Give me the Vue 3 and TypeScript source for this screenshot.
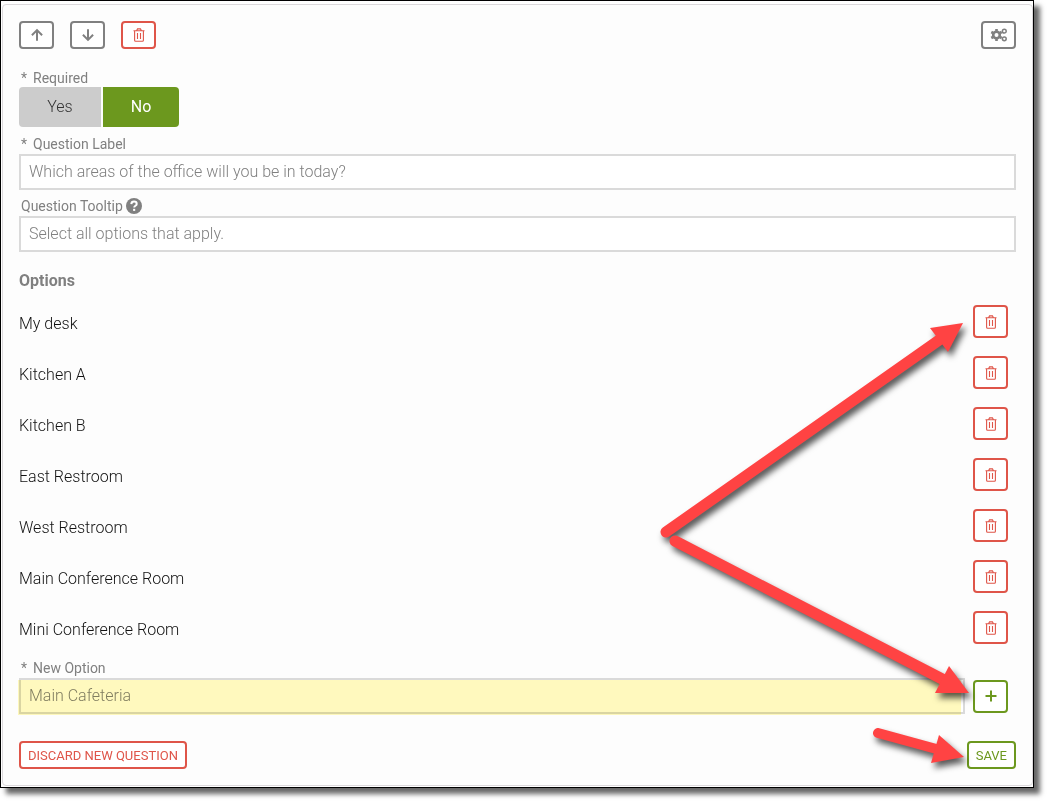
<script setup lang="ts">
import { ref } from 'vue'

const required = ref<boolean>(false)
const questionLabel = ref('Which areas of the office will you be in today?')
const questionTooltip = ref('Select all options that apply.')
const newOption = ref('Main Cafeteria')
const options = ref<string[]>([
  'My desk',
  'Kitchen A',
  'Kitchen B',
  'East Restroom',
  'West Restroom',
  'Main Conference Room',
  'Mini Conference Room',
])

function removeOption(index: number): void {
  options.value.splice(index, 1)
}

function addOption(): void {
  const value = newOption.value.trim()
  if (value) {
    options.value.push(value)
    newOption.value = ''
  }
}
</script>

<template>
  <main class="frame">
    <form class="card" @submit.prevent>
      <div class="toolbar">
        <button type="button" class="btn grey" aria-label="Move up">
          <svg class="icon" viewBox="0 0 14 14"><path d="M7 12.7V2.5M1.9 7.2L7 2.1l5.1 5.1" fill="none" stroke="currentColor" stroke-width="2" /></svg>
        </button>
        <button type="button" class="btn grey" aria-label="Move down">
          <svg class="icon" viewBox="0 0 14 14"><path d="M7 1.3v10.2M1.9 6.8L7 11.9l5.1-5.1" fill="none" stroke="currentColor" stroke-width="2" /></svg>
        </button>
        <button type="button" class="btn red" aria-label="Delete question">
          <svg class="icon" viewBox="0 0 14 14"><path d="M1.5 2.8h11M4.7 2.5l.8-1.6h3l.8 1.6M2.6 3v9.2q0 1 1 1h6.8q1 0 1-1V3M5.5 5v6M8.5 5v6" fill="none" stroke="currentColor" stroke-width="1.1" /></svg>
        </button>
        <button type="button" class="btn grey settings" aria-label="Settings">
          <svg class="gears" viewBox="0 0 18 14">
            <g fill="none" stroke="currentColor">
              <circle cx="6.5" cy="7" r="3.3" stroke-width="2.6" />
              <path d="M6.5 1v2M6.5 11v2M1.3 4l1.8 1M9.9 9l1.8 1M1.3 10l1.8-1M9.9 5l1.8-1" stroke-width="2.6" />
              <circle cx="14.3" cy="3.2" r="1.9" stroke-width="1.5" />
              <circle cx="14.3" cy="10.8" r="1.9" stroke-width="1.5" />
            </g>
          </svg>
        </button>
      </div>

      <div id="required-label" class="label required-label"><span class="star">*</span>Required</div>
      <div class="toggle" role="group" aria-labelledby="required-label">
        <button type="button" class="yes" :class="{ on: required }" :aria-pressed="required" @click="required = true">Yes</button>
        <button type="button" class="no" :class="{ on: !required }" :aria-pressed="!required" @click="required = false">No</button>
      </div>

      <label class="label" for="question-label"><span class="star">*</span>Question Label</label>
      <input id="question-label" v-model="questionLabel" class="field" type="text" />

      <label class="label" for="question-tooltip">Question Tooltip
        <svg class="help" viewBox="0 0 16 16">
          <circle cx="8" cy="8" r="8" fill="currentColor" />
          <path d="M5.3 6.1C5.4 4.4 6.5 3.6 8 3.6s2.7.9 2.7 2.3c0 1.9-2.5 1.9-2.5 3.7" fill="none" stroke="#fff" stroke-width="2" />
          <rect x="7.1" y="10.8" width="2.1" height="2.1" fill="#fff" />
        </svg>
      </label>
      <input id="question-tooltip" v-model="questionTooltip" class="field" type="text" />

      <h2 class="heading">Options</h2>
      <ul class="options">
        <li v-for="(option, index) in options" :key="option" class="option">
          <span class="option-name">{{ option }}</span>
          <button type="button" class="btn red tall" :aria-label="'Delete ' + option" @click="removeOption(index)">
            <svg class="icon" viewBox="0 0 14 14"><path d="M1.5 2.8h11M4.7 2.5l.8-1.6h3l.8 1.6M2.6 3v9.2q0 1 1 1h6.8q1 0 1-1V3M5.5 5v6M8.5 5v6" fill="none" stroke="currentColor" stroke-width="1.1" /></svg>
          </button>
        </li>
      </ul>

      <label class="label" for="new-option"><span class="star">*</span>New Option</label>
      <div class="add-row">
        <div class="marked">
          <input id="new-option" v-model="newOption" class="field" type="text" />
          <span class="highlight"></span>
        </div>
        <button type="button" class="btn green tall" aria-label="Add option" @click="addOption">
          <svg class="icon" viewBox="0 0 14 14"><path d="M7 1.5v11M1.5 7h11" fill="none" stroke="currentColor" stroke-width="2" /></svg>
        </button>
      </div>

      <div class="footer">
        <button type="button" class="btn red text">DISCARD NEW QUESTION</button>
        <button type="submit" class="btn green text">SAVE</button>
      </div>
    </form>

    <svg class="arrows" width="400" height="500" viewBox="633 300 400 500" aria-hidden="true">
      <g stroke="#ff4343" fill="#ff4343">
        <g class="arrow"><path d="M666 532L942 338" stroke-width="11" stroke-linecap="round" /><path d="M963 323L930 328L948 352Z" stroke="none" /></g>
        <g class="arrow"><path d="M675 541L946 681" stroke-width="11" stroke-linecap="round" /><path d="M969 693L949 666L935 693Z" stroke="none" /></g>
        <g class="arrow"><path d="M878 733L940 750" stroke-width="10" stroke-linecap="round" /><path d="M964 757L939 735L931 763Z" stroke="none" /></g>
      </g>
    </svg>
  </main>
</template>

<style>
body {
  min-height: 100vh;
  background: #fff;
}
</style>

<style scoped>
.frame {
  position: relative;
  box-sizing: border-box;
  margin: 0 15px 15px 0;
  padding: 3px 0 1px 1px;
  border: 1px solid #000;
  background: #fff;
  box-shadow: 6px 6px 5px rgba(0, 0, 0, 0.6);
  color: #808080;
  font-family: Roboto, "Liberation Sans", sans-serif;
}

.card {
  padding: 16px;
  border: 1px solid #dcd9dc;
  border-radius: 4px;
  background: #fdfdfd;
}

.toolbar {
  display: flex;
  gap: 16px;
}

.settings {
  margin-left: auto;
}

.btn {
  display: inline-flex;
  box-sizing: border-box;
  flex: none;
  align-items: center;
  justify-content: center;
  width: 35px;
  height: 28px;
  padding: 0;
  border: 2px solid currentColor;
  border-radius: 4px;
  background: #fff;
  font-family: inherit;
  font-size: 13px;
  cursor: pointer;
}

.tall {
  height: 33px;
}

.text {
  width: auto;
  padding: 0 7px;
}

.grey {
  color: #808080;
}

.red {
  color: #df5549;
}

.green {
  color: #6c981e;
}

.icon {
  width: 14px;
  height: 14px;
}

.gears {
  width: 18px;
  height: 14px;
}

.label {
  display: flex;
  align-items: center;
  height: 20px;
  margin-top: 6px;
  padding-left: 2px;
  font-size: 14px;
  line-height: 20px;
}

.required-label {
  height: 18px;
  margin-top: 20px;
}

.star {
  width: 12px;
}

.help {
  width: 16px;
  height: 16px;
  margin-left: 3px;
}

.toggle {
  display: flex;
  gap: 2px;
}

.toggle button {
  height: 40px;
  padding: 0 0 2px;
  border: 0;
  background: #ccc;
  color: #333;
  font-family: inherit;
  font-size: 16px;
  font-weight: 300;
  cursor: pointer;
}

.toggle .on {
  background: #6c981e;
  color: #fff;
  font-weight: 400;
}

.toggle .yes {
  width: 82px;
  border-radius: 4px 0 0 4px;
}

.toggle .no {
  width: 76px;
  border-radius: 0 4px 4px 0;
}

.toggle + .label {
  margin-top: 7px;
}

.field {
  display: block;
  box-sizing: border-box;
  width: 100%;
  height: 36px;
  padding: 0 8px 2px;
  border: 2px solid #dadada;
  border-radius: 0;
  outline: 0;
  background: #fff;
  color: #808080;
  font-family: inherit;
  font-size: 16px;
  font-weight: 300;
}

.heading {
  margin: 19px 0 14px;
  font-size: 16px;
  font-weight: 700;
  line-height: 20px;
}

.options {
  display: grid;
  gap: 18px;
  margin: 0;
  padding: 0 8px 0 0;
  list-style: none;
}

.option {
  display: flex;
  align-items: center;
  justify-content: space-between;
  height: 33px;
  color: #111;
  font-size: 16px;
  font-weight: 300;
}

.option-name {
  padding-top: 4px;
}

.options + .label {
  margin-top: 14px;
}

.add-row {
  display: flex;
  align-items: center;
  gap: 8px;
  padding-right: 8px;
}

.marked {
  position: relative;
  flex: 1;
}

.highlight {
  position: absolute;
  inset: 2px 4px -1px -1px;
  background: #fff9be;
  mix-blend-mode: multiply;
  pointer-events: none;
}

.footer {
  display: flex;
  justify-content: space-between;
  margin-top: 27px;
}

.arrows {
  position: absolute;
  top: 299px;
  right: 0;
  pointer-events: none;
}

.arrow {
  filter: drop-shadow(3px 5px 3px rgba(0, 0, 0, 0.65));
}
</style>
